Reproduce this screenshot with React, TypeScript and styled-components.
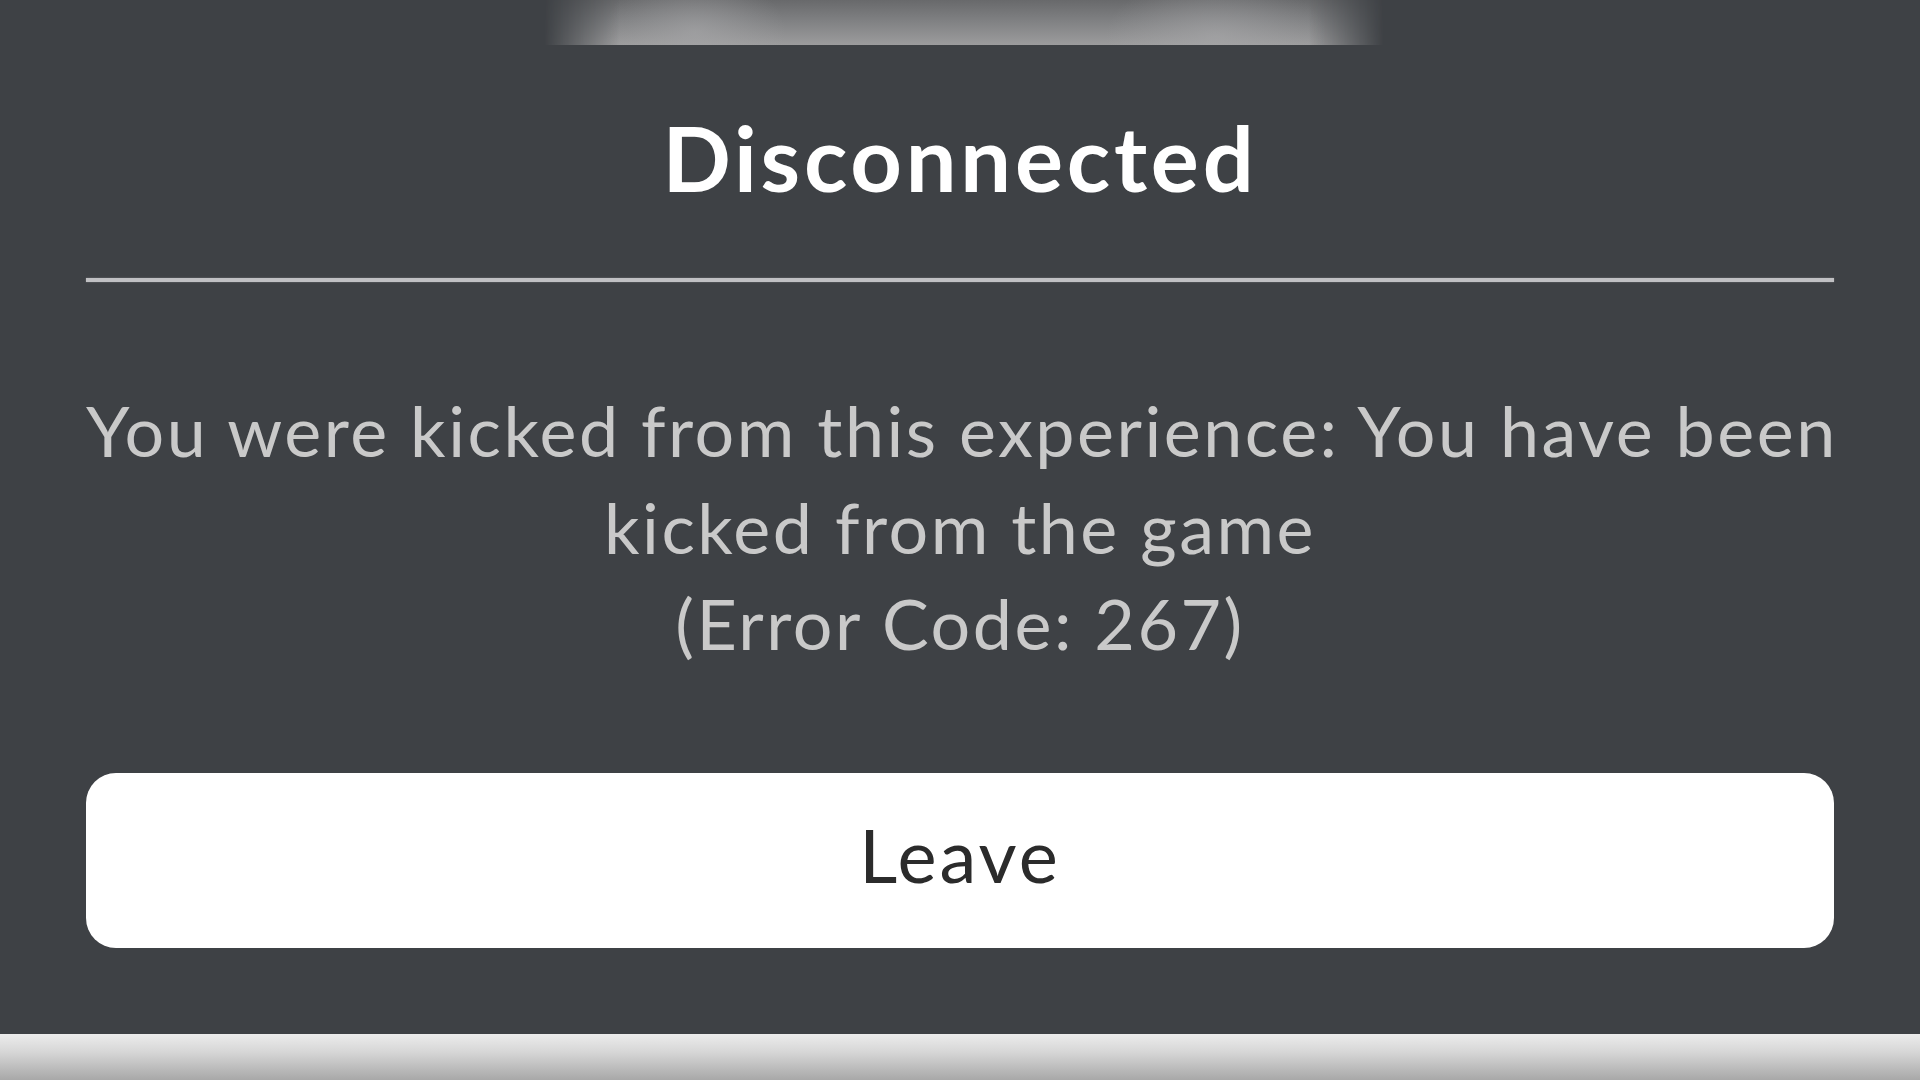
import React from "react";
import styled, { createGlobalStyle } from "styled-components";

const GlobalStyle = createGlobalStyle`
  html, body {
    margin: 0;
    padding: 0;
    background: #3e4145;
  }
  body {
    font-family: Lato, "Open Sans", sans-serif;
  }
`;

const Screen = styled.div`
  width: 1920px;
  height: 1080px;
  background: #3e4145;
  display: flex;
  flex-direction: column;
  align-items: stretch;
  overflow: hidden;
`;

const TopGlow = styled.div`
  align-self: center;
  width: 840px;
  height: 45px;
  margin-left: 8px;
  background:
    radial-gradient(ellipse 90px 60px at 18% 70%, rgba(170,170,172,0.55), transparent),
    radial-gradient(ellipse 110px 60px at 80% 80%, rgba(170,170,172,0.55), transparent),
    linear-gradient(to bottom, #68696b 0%, #7f8082 45%, #9c9c9d 100%);
  -webkit-mask-image: linear-gradient(to right, transparent 0%, #000 9%, #000 91%, transparent 100%);
  mask-image: linear-gradient(to right, transparent 0%, #000 9%, #000 91%, transparent 100%);
`;

const Dialog = styled.div`
  display: flex;
  flex-direction: column;
  align-items: stretch;
  padding: 0 86px 0 86px;
`;

const Title = styled.h1`
  margin: 58px 0 0;
  font-family: Lato, "Open Sans", sans-serif;
  font-weight: 700;
  font-size: 90px;
  line-height: 108px;
  letter-spacing: 3.8px;
  color: #ffffff;
  text-align: center;
`;

const Divider = styled.hr`
  margin: 67px 0 0;
  border: 0;
  height: 4px;
  background: #c0c0c3;
  box-shadow: 0 0 1.5px rgba(192, 192, 195, 0.6);
`;

const Message = styled.p`
  margin: 100px 0 0;
  font-family: Lato, "Open Sans", sans-serif;
  font-weight: 400;
  font-size: 70px;
  line-height: 96.5px;
  letter-spacing: 2.5px;
  color: #c9c9c9;
  text-align: center;
  white-space: nowrap;
`;

const LeaveButton = styled.button`
  margin: 101px 0 0;
  height: 175px;
  border: 0;
  border-radius: 30px;
  background: #ffffff;
  display: flex;
  align-items: center;
  justify-content: center;
  padding: 0 0 10px;
  font-family: Lato, "Open Sans", sans-serif;
  font-weight: 400;
  font-size: 74px;
  line-height: 1.2;
  letter-spacing: 3px;
  color: #2b2b2b;
  cursor: pointer;
`;

const BottomBar = styled.div`
  margin-top: auto;
  height: 46px;
  background: linear-gradient(to bottom, #ececec 0%, #d6d6d6 40%, #a8a8a8 100%);
`;

export default function App() {
  return (
    <>
      <GlobalStyle />
      <Screen>
        <TopGlow />
        <Dialog>
          <Title>Disconnected</Title>
          <Divider />
          <Message>
            You were kicked from this experience: You have been
            <br />
            kicked from the game
            <br />
            (Error Code: 267)
          </Message>
          <LeaveButton>Leave</LeaveButton>
        </Dialog>
        <BottomBar />
      </Screen>
    </>
  );
}
